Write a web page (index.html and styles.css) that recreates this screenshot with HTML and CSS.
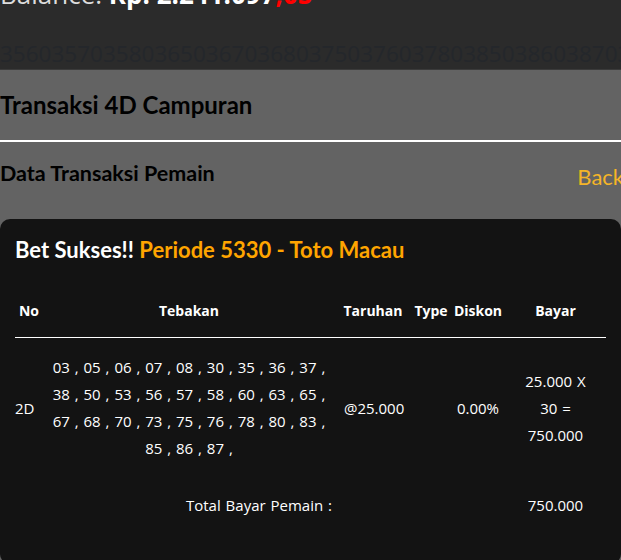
FILE: index.html
```html
<!DOCTYPE html>
<html>
<head>
<meta charset="utf-8">
<link rel="stylesheet" href="styles.css">
</head>
<body>
<div class="top">
  <div class="balance">Balance: <b>Rp. 2.241.097</b><b class="red">,05</b></div>
  <div class="digits">356035703580365036703680375037603780385038603870388039503960</div>
</div>
<div class="main">
  <h1 class="title">Transaksi 4D Campuran</h1>
  <div class="subbar">
    <h2 class="subtitle">Data Transaksi Pemain</h2>
    <a class="back">Back</a>
  </div>
  <div class="card">
    <h3 class="card-title">Bet Sukses!! <span class="orange">Periode 5330 - Toto Macau</span></h3>
    <table class="tbl">
      <thead>
        <tr>
          <th class="c-no">No</th>
          <th class="c-teb">Tebakan</th>
          <th class="c-tar">Taruhan</th>
          <th class="c-type">Type</th>
          <th class="c-dis">Diskon</th>
          <th class="c-bay">Bayar</th>
        </tr>
      </thead>
      <tbody>
        <tr class="bet">
          <td class="c-no l">2D</td>
          <td class="c-teb">03 , 05 , 06 , 07 , 08 , 30 , 35 , 36 , 37 , 38 , 50 , 53 , 56 , 57 , 58 , 60 , 63 , 65 , 67 , 68 , 70 , 73 , 75 , 76 , 78 , 80 , 83 , 85 , 86 , 87 ,</td>
          <td class="c-tar l">@25.000</td>
          <td class="c-type"></td>
          <td class="c-dis">0.00%</td>
          <td class="c-bay">25.000 X 30 = 750.000</td>
        </tr>
        <tr class="total">
          <td colspan="2" class="total-label">Total Bayar Pemain :</td>
          <td></td>
          <td></td>
          <td></td>
          <td class="c-bay">750.000</td>
        </tr>
      </tbody>
    </table>
  </div>
</div>
</body>
</html>
```

FILE: styles.css
```css
html, body {
  margin: 0;
  padding: 0;
  background: #636363;
  height: 560px;
  overflow: hidden;
}
body {
  font-family: "Open Sans", "Noto Sans", sans-serif;
  color: #fff;
}
.top {
  background: #2b2b2b;
  height: 70px;
  overflow: hidden;
  border-bottom: 1px solid #3a3a3a;
  box-sizing: border-box;
}
.balance {
  font-size: 26px;
  line-height: 30px;
  margin-top: -21px;
  color: #ddd;
  white-space: nowrap;
}
.balance b { color: #fff; }
.balance .red { color: #f00; }
.digits {
  margin-top: 32px;
  font-size: 22.5px;
  line-height: 26px;
  color: #24272b;
  white-space: nowrap;
}
.title {
  margin: 0;
  font-family: "Lato", sans-serif;
  font-weight: 700;
  font-size: 24px;
  line-height: 70px;
  height: 70px;
  color: #000;
  border-bottom: 2px solid #fff;
}
.subbar {
  display: flex;
  justify-content: space-between;
  align-items: flex-start;
  height: 77px;
}
.subtitle {
  margin: 18px 0 0 0;
  font-family: "Lato", sans-serif;
  font-size: 21.5px;
  font-weight: 700;
  line-height: 26px;
  color: #000;
}
.back {
  margin-top: 22px;
  font-family: "Lato", sans-serif;
  font-size: 22px;
  line-height: 26px;
  color: #f5b528;
  margin-right: -3px;
}
.card {
  background: #131313;
  border-radius: 10px;
  height: 345px;
  padding: 0 15px;
  box-sizing: border-box;
}
.card-title {
  margin: 0;
  padding-top: 17px;
  font-family: "Lato", sans-serif;
  font-size: 22px;
  font-weight: 700;
  line-height: 28px;
  color: #fff;
}
.orange { color: #ffa500; }
.tbl {
  width: 591px;
  margin-top: 23px;
  border-collapse: collapse;
  font-size: 15px;
  word-spacing: 1px;
  table-layout: fixed;
}
.tbl th {
  font-weight: 700;
  font-size: 14px;
  word-spacing: 0;
  height: 46px;
  padding: 0 0 4px 0;
  border-bottom: 1px solid #fff;
  text-align: center;
  vertical-align: middle;
}
.tbl td {
  padding: 0;
  text-align: center;
  vertical-align: middle;
  line-height: 27px;
}
.tbl tr.bet td { padding-top: 16px; padding-bottom: 16px; }
.c-no { width: 28px; }
.c-teb { width: 292px; }
.c-tar { width: 76px; }
.c-type { width: 40px; }
.c-dis { width: 54px; }
.c-bay { width: 101px; }
.tbl td.l { text-align: left; }
.tbl td.c-teb { padding-left: 8px; padding-right: 8px; }
.tbl td.c-tar { padding-left: 9px; }
.tbl td.c-bay { padding-left: 14px; padding-right: 14px; }
.tbl tr.total td { height: 54px; }
.tbl td.total-label { text-align: right; padding-right: 3px; }
```
